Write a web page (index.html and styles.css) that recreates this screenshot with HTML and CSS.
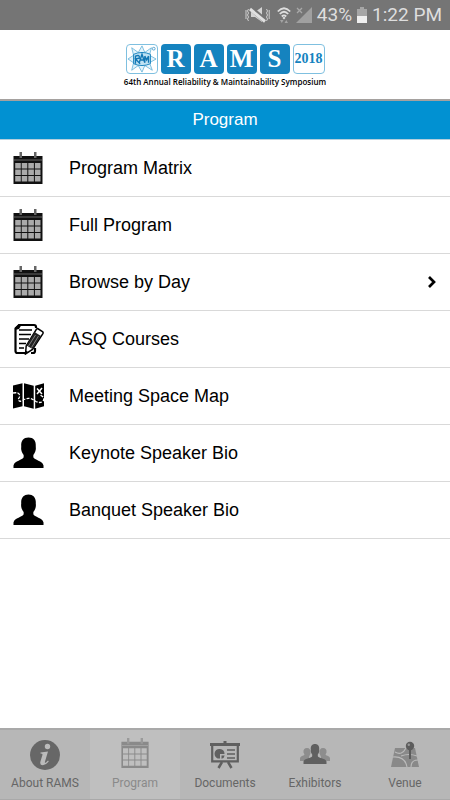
FILE: index.html
```html
<!DOCTYPE html>
<html lang="en">
<head>
<meta charset="utf-8">
<meta name="viewport" content="width=device-width, initial-scale=1">
<title>RAMS 2018 – Program</title>
<link rel="stylesheet" href="styles.css">
</head>
<body>
<svg class="defs" aria-hidden="true">
  <symbol id="calendar" viewBox="0 0 30 32">
    <path class="cal-frame" d="M.5 4h29v28H.5z"/>
    <path class="cal-line" d="M1 8h28"/>
    <path class="cal-cell" d="M2.200 11h5.600v5.600H2.200zM8.700 11h5.600v5.600H8.700zM15.300 11h5.600v5.600h-5.600zM21.900 11h5.600v5.600h-5.600zM2.200 17.500h5.600V23H2.200zM8.700 17.500h5.600V23H8.700zM15.300 17.500h5.600V23h-5.600zM21.900 17.500h5.600V23h-5.600zM2.200 24h5.600v5.600H2.200zM8.700 24h5.600v5.600H8.700zM15.300 24h5.600v5.600h-5.600zM21.900 24h5.600v5.600h-5.600z"/>
    <path class="cal-ring" d="M6.500 0h2.500v6H6.500zM21 0h2.500v6H21z"/>
  </symbol>
  <symbol id="person" viewBox="0 0 32 32">
    <path d="M16 0c5 0 8 3.500 7.500 9 .6 4-.8 7-2.500 9v2.500c1 3 9.500 3.500 10.500 8.500v2.500H.5V29c1-5 9.500-5.500 10.500-8.500V18c-1.700-2-3.100-5-2.500-9C8 3.500 11 0 16 0z"/>
  </symbol>
</svg>

<div class="status">
  <svg width="25" height="18" viewBox="0 0 25 18" aria-label="Vibrate">
    <path d="M6 6h4l7-5v15l-7-5H6z" fill="#d4d4d4"/>
    <path d="M5 1.500l15 13" stroke="#757575" stroke-width="5"/>
    <path d="M5 3l15 12.500" stroke="#e0e0e0" stroke-width="3"/>
    <path d="M3.500 3l-1 2 1 2-1 2 1 2-1 2 1 2M1 4v9M21.500 3l1 2-1 2 1 2-1 2 1 2-1 2M24.200 4v9" fill="none" stroke="#d0d0d0"/>
  </svg>
  <svg class="wifi" width="14" height="18" viewBox="0 0 14 18" aria-label="Wi-Fi">
    <path d="M.8 5.500q6.200-6.500 12.400 0M2.800 8q4.200-4.500 8.400 0M4.800 10.500q2.200-2.200 4.400 0" fill="none" stroke="#dedede" stroke-width="1.800"/>
    <path d="M7 10.500l1.500 1.500L7 13.500 5.500 12z" fill="#dedede"/>
    <path d="M3 14h3.500l-1.700 3zM7.500 17H11l-1.700-3z" fill="#a4a4a4"/>
  </svg>
  <svg width="16" height="18" viewBox="0 0 16 18" aria-label="No signal">
    <path d="M16 1v16H0z" fill="#a0a0a0"/>
    <path d="M1 2l5 5M6 2L1 7" stroke="#a8a8a8" stroke-width="1.300"/>
  </svg>
  <span class="battery-text">43%</span>
  <svg width="10" height="18" viewBox="0 0 10 18" aria-label="Battery">
    <path d="M3 1h4v2h3v14H0V3h3z" fill="#a6a6a6"/><path d="M0 10h10v7H0z" fill="#efefef"/>
  </svg>
  <time>1:22 PM</time>
</div>

<header class="brand">
  <div class="logo">
    <span class="tile outline">
      <svg width="32" height="30" viewBox="0 0 32 30" aria-hidden="true">
        <path d="M16 1l3 7 7-5-2 8 7 4-7 4 3 8-8-5-3 7-4-7-7 5 2-8-6-4 6-4-2-8 7 5z" fill="#e3f3fb" stroke="#5caed6" stroke-width=".8"/>
        <path d="M7 10q9-4 18 0v10q-9 4-18 0z" fill="#bfe2f3" stroke="#1581be"/>
        <path d="M9 20v-8q5-2 4 2l-4 1 5 5M13 19l3-9 3 9M14 16h5M19 19v-7l2 4 2-4v7" fill="none" stroke="#1277b4" stroke-width="1.500"/>
        <circle cx="28.500" cy="4" r="1.500" fill="none" stroke="#1581be" stroke-width=".7"/>
      </svg>
    </span>
    <span class="tile">R</span><span class="tile">A</span><span class="tile">M</span><span class="tile">S</span>
    <span class="tile outline year">2018</span>
  </div>
  <p class="tagline">64th Annual Reliability &amp; Maintainability Symposium</p>
</header>

<h1 class="title">Program</h1>

<main>
  <ul class="menu">
    <li><a href="#matrix"><svg class="icon" width="30" height="32"><use href="#calendar" width="30" height="32"/></svg>Program Matrix</a></li>
    <li><a href="#full"><svg class="icon" width="30" height="32"><use href="#calendar" width="30" height="32"/></svg>Full Program</a></li>
    <li><a href="#day"><svg class="icon" width="30" height="32"><use href="#calendar" width="30" height="32"/></svg>Browse by Day
      <svg class="chevron" width="10" height="14" viewBox="0 0 10 14"><path d="M2 2l5 5-5 5" fill="none" stroke="#000" stroke-width="2.700"/></svg></a></li>
    <li><a href="#courses"><svg class="icon" width="30" height="32" viewBox="0 0 30 32">
      <path d="M22 5V4q0-2-2-2H5L1.500 5.500V28q0 2 2 2H11M21 25v3q0 2-2 2h-2" fill="none" stroke="#000" stroke-width="2.200"/>
      <path d="M1 7V5l4-4h3l-3 5z"/>
      <path d="M5 7h13M5 11.500h12M5 16h10M5 20.500h7M5 25h5" stroke="#000" stroke-width="1.400"/>
      <path d="M23.500 5.500l5 3.200q1 .8.400 2L18.500 26.500l-7 4.500.7-8L22.500 6z" fill="#fff" stroke="#000" stroke-width="1.500"/>
      <path d="M20.500 9l6.500 4-8.500 13-6-3.500z" fill="#222"/>
      <path d="M21.500 12l-7 11M24.500 13l-7 11.500" stroke="#999" stroke-width=".8"/>
      <path d="M11.500 31l.2-3.500 2.800 1.700z"/>
    </svg>ASQ Courses</a></li>
    <li><a href="#map"><svg class="icon" width="32" height="32" viewBox="0 0 32 32">
      <path d="M0 5.500l9.500-2.300v23L0 28.500zM11 3.200l9.700 2.500v23L11 26.200zM22.200 5.700L31 3.200v23l-8.800 2.500z"/>
      <path d="M0 13q6-1 6.500 2T5 19q1 3 4 2 5-4 10-2l4 2.500q4 2 6.500 0t0-5l-3-2" fill="none" stroke="#fff" stroke-width="1.300" stroke-dasharray="3 1.400"/>
      <path d="M24 8.500l5 5.500M29 8l-5 6" stroke="#fff" stroke-width="1.500"/>
    </svg>Meeting Space Map</a></li>
    <li><a href="#keynote"><svg class="icon" width="32" height="32"><use href="#person" width="31" height="32"/></svg>Keynote Speaker Bio</a></li>
    <li><a href="#banquet"><svg class="icon" width="32" height="32"><use href="#person" width="31" height="32"/></svg>Banquet Speaker Bio</a></li>
  </ul>
</main>

<nav class="tabs">
  <a href="#about"><svg width="32" height="34" viewBox="0 0 32 34">
    <circle cx="16" cy="18" r="15" fill="#676767"/>
    <circle cx="18.500" cy="9.500" r="2.700" fill="#bbb"/>
    <path d="M11.500 15.500l7.500-1-3 10q-.5 2 1 1l2-2 .8.800q-3 4-6 4-3.500-.3-2.300-4l2-6.500q.3-1.300-2-1.300z" fill="#bbb"/>
  </svg>About RAMS</a>
  <a href="#program" class="active" aria-current="page"><svg width="30" height="34"><use href="#calendar" y="1" width="30" height="30"/></svg>Program</a>
  <a href="#documents"><svg width="32" height="34" viewBox="0 0 32 34">
    <path d="M14.500 4h3v3h-3zM1 6h30v3H1z" fill="#606060"/>
    <path d="M3.200 8v16.300h25.600V8" fill="none" stroke="#606060" stroke-width="2.200"/>
    <path d="M13 25l-3.500 6M19 25l3.500 6" stroke="#606060" stroke-width="2.500"/>
    <path d="M11 12a4.800 4.800 0 1 0 0 9.500V17h4.500a5 5 0 0 0-4.500-5zM12.500 18.500v3.200q2.800-.5 3.200-3.200z" fill="#606060"/>
    <path d="M18 13h8M18 17h8M18 21h8" stroke="#606060" stroke-width="1.700"/>
  </svg>Documents</a>
  <a href="#exhibitors"><svg width="32" height="34" viewBox="0 0 32 34">
    <path d="M8 11q4 0 3.500 5.500L10 20v4H1v-2.500q0-2 3.500-3l1-1-1-2Q4 11 8 11zM24 11q-4 0-3.500 5.500L22 20v4h9v-2.500q0-2-3.500-3l-1-1 1-2Q28 11 24 11z" fill="#8d8d8d"/>
    <path d="M16 7c3 0 4.500 2.200 4.200 5.500.3 2-.5 4-1.400 5v1.700c1 2 8 2 8.700 5.300V27h-23v-2.500c.7-3.300 7.700-3.300 8.700-5.300v-1.700c-.9-1-1.700-3-1.400-5C11.500 9.200 13 7 16 7z" fill="#606060"/>
  </svg>Exhibitors</a>
  <a href="#venue"><svg width="32" height="34" viewBox="0 0 32 34">
    <path d="M6 11h20l4 19H2z" fill="#898989"/>
    <path d="M4 20q12-1 14 10M6 15q7 4 11-4M12 19q8-3 16 0M22 30q0-7 7-7" fill="none" stroke="#bbb" stroke-width="1.100"/>
    <path d="M20 11h2v11h-2z" fill="#5c5c5c"/><circle cx="21" cy="9" r="4.200" fill="#5c5c5c"/><circle cx="19.800" cy="7.800" r="1.200" fill="#999"/>
  </svg>Venue</a>
</nav>
</body>
</html>
```
FILE: styles.css
```css
* { box-sizing: border-box; }

body {
  margin: 0;
  min-height: 100vh;
  display: flex;
  flex-direction: column;
  background: #fff;
  color: #000;
  font-family: "Liberation Sans", Arial, sans-serif;
}

a { color: inherit; text-decoration: none; }
.defs { position: absolute; width: 0; height: 0; }

.status {
  display: flex;
  align-items: center;
  justify-content: flex-end;
  gap: 5px;
  height: 30px;
  padding: 0 8px;
  background: #757575;
  color: #dedede;
  font: 19px/30px Roboto, sans-serif;
}
.wifi { margin-left: 2px; }

.brand {
  display: flex;
  flex-direction: column;
  align-items: center;
  height: 71px;
  padding-top: 14px;
  border-bottom: 2px solid #a5a19f;
}
.logo { display: flex; gap: 3px; }
.tile {
  display: flex;
  align-items: center;
  justify-content: center;
  width: 30px;
  height: 30px;
  border-radius: 4px;
  background: #1583bf;
  color: #fff;
  font: bold 25px/30px "Liberation Serif", serif;
}
.outline {
  width: 32px;
  border: 1px solid #7fc0e0;
  background: #fff;
}
.year {
  color: #1583bf;
  font-size: 14px;
}
.tagline {
  margin: 2px 0 0;
  font: 600 8px/12px "Open Sans", sans-serif;
  white-space: nowrap;
}

.title {
  height: 39px;
  margin: 0;
  border-bottom: 1px solid #b4cfdd;
  background: #0191d2;
  color: #fff;
  font-size: 17px;
  font-weight: normal;
  line-height: 38px;
  text-align: center;
}

main { flex: 1; }
.menu { margin: 0; padding: 0; list-style: none; }
.menu a {
  display: flex;
  align-items: center;
  height: 57px;
  padding: 0 13px;
  border-bottom: 1px solid #d9d9d9;
  font-size: 18px;
  line-height: 20px;
}
.icon { flex: none; width: 32px; margin-right: 24px; }
.chevron { margin-left: auto; }

.cal-frame { fill: var(--frame, #111); }
.cal-line { stroke: var(--line, #666); }
.cal-cell { fill: var(--cell, #aaa); }
.cal-ring { fill: var(--ring, #666); }

.tabs {
  display: grid;
  grid-template-columns: repeat(5, 1fr);
  height: 72px;
  border-top: 2px solid #a9a9a9;
  border-bottom: 1px solid #a9a9a9;
  background: #b7b7b7;
  color: #666;
  font: 12px/18px Roboto, sans-serif;
}
.tabs a {
  display: flex;
  flex-direction: column;
  align-items: center;
  gap: 3px;
  padding-top: 7px;
}
.tabs .active {
  --frame: #8a8a8a;
  --line: #a2a2a2;
  --cell: #bfbfbf;
  --ring: #9a9a9a;
  background: #bfbfbf;
  color: #8a8a8a;
}
```
